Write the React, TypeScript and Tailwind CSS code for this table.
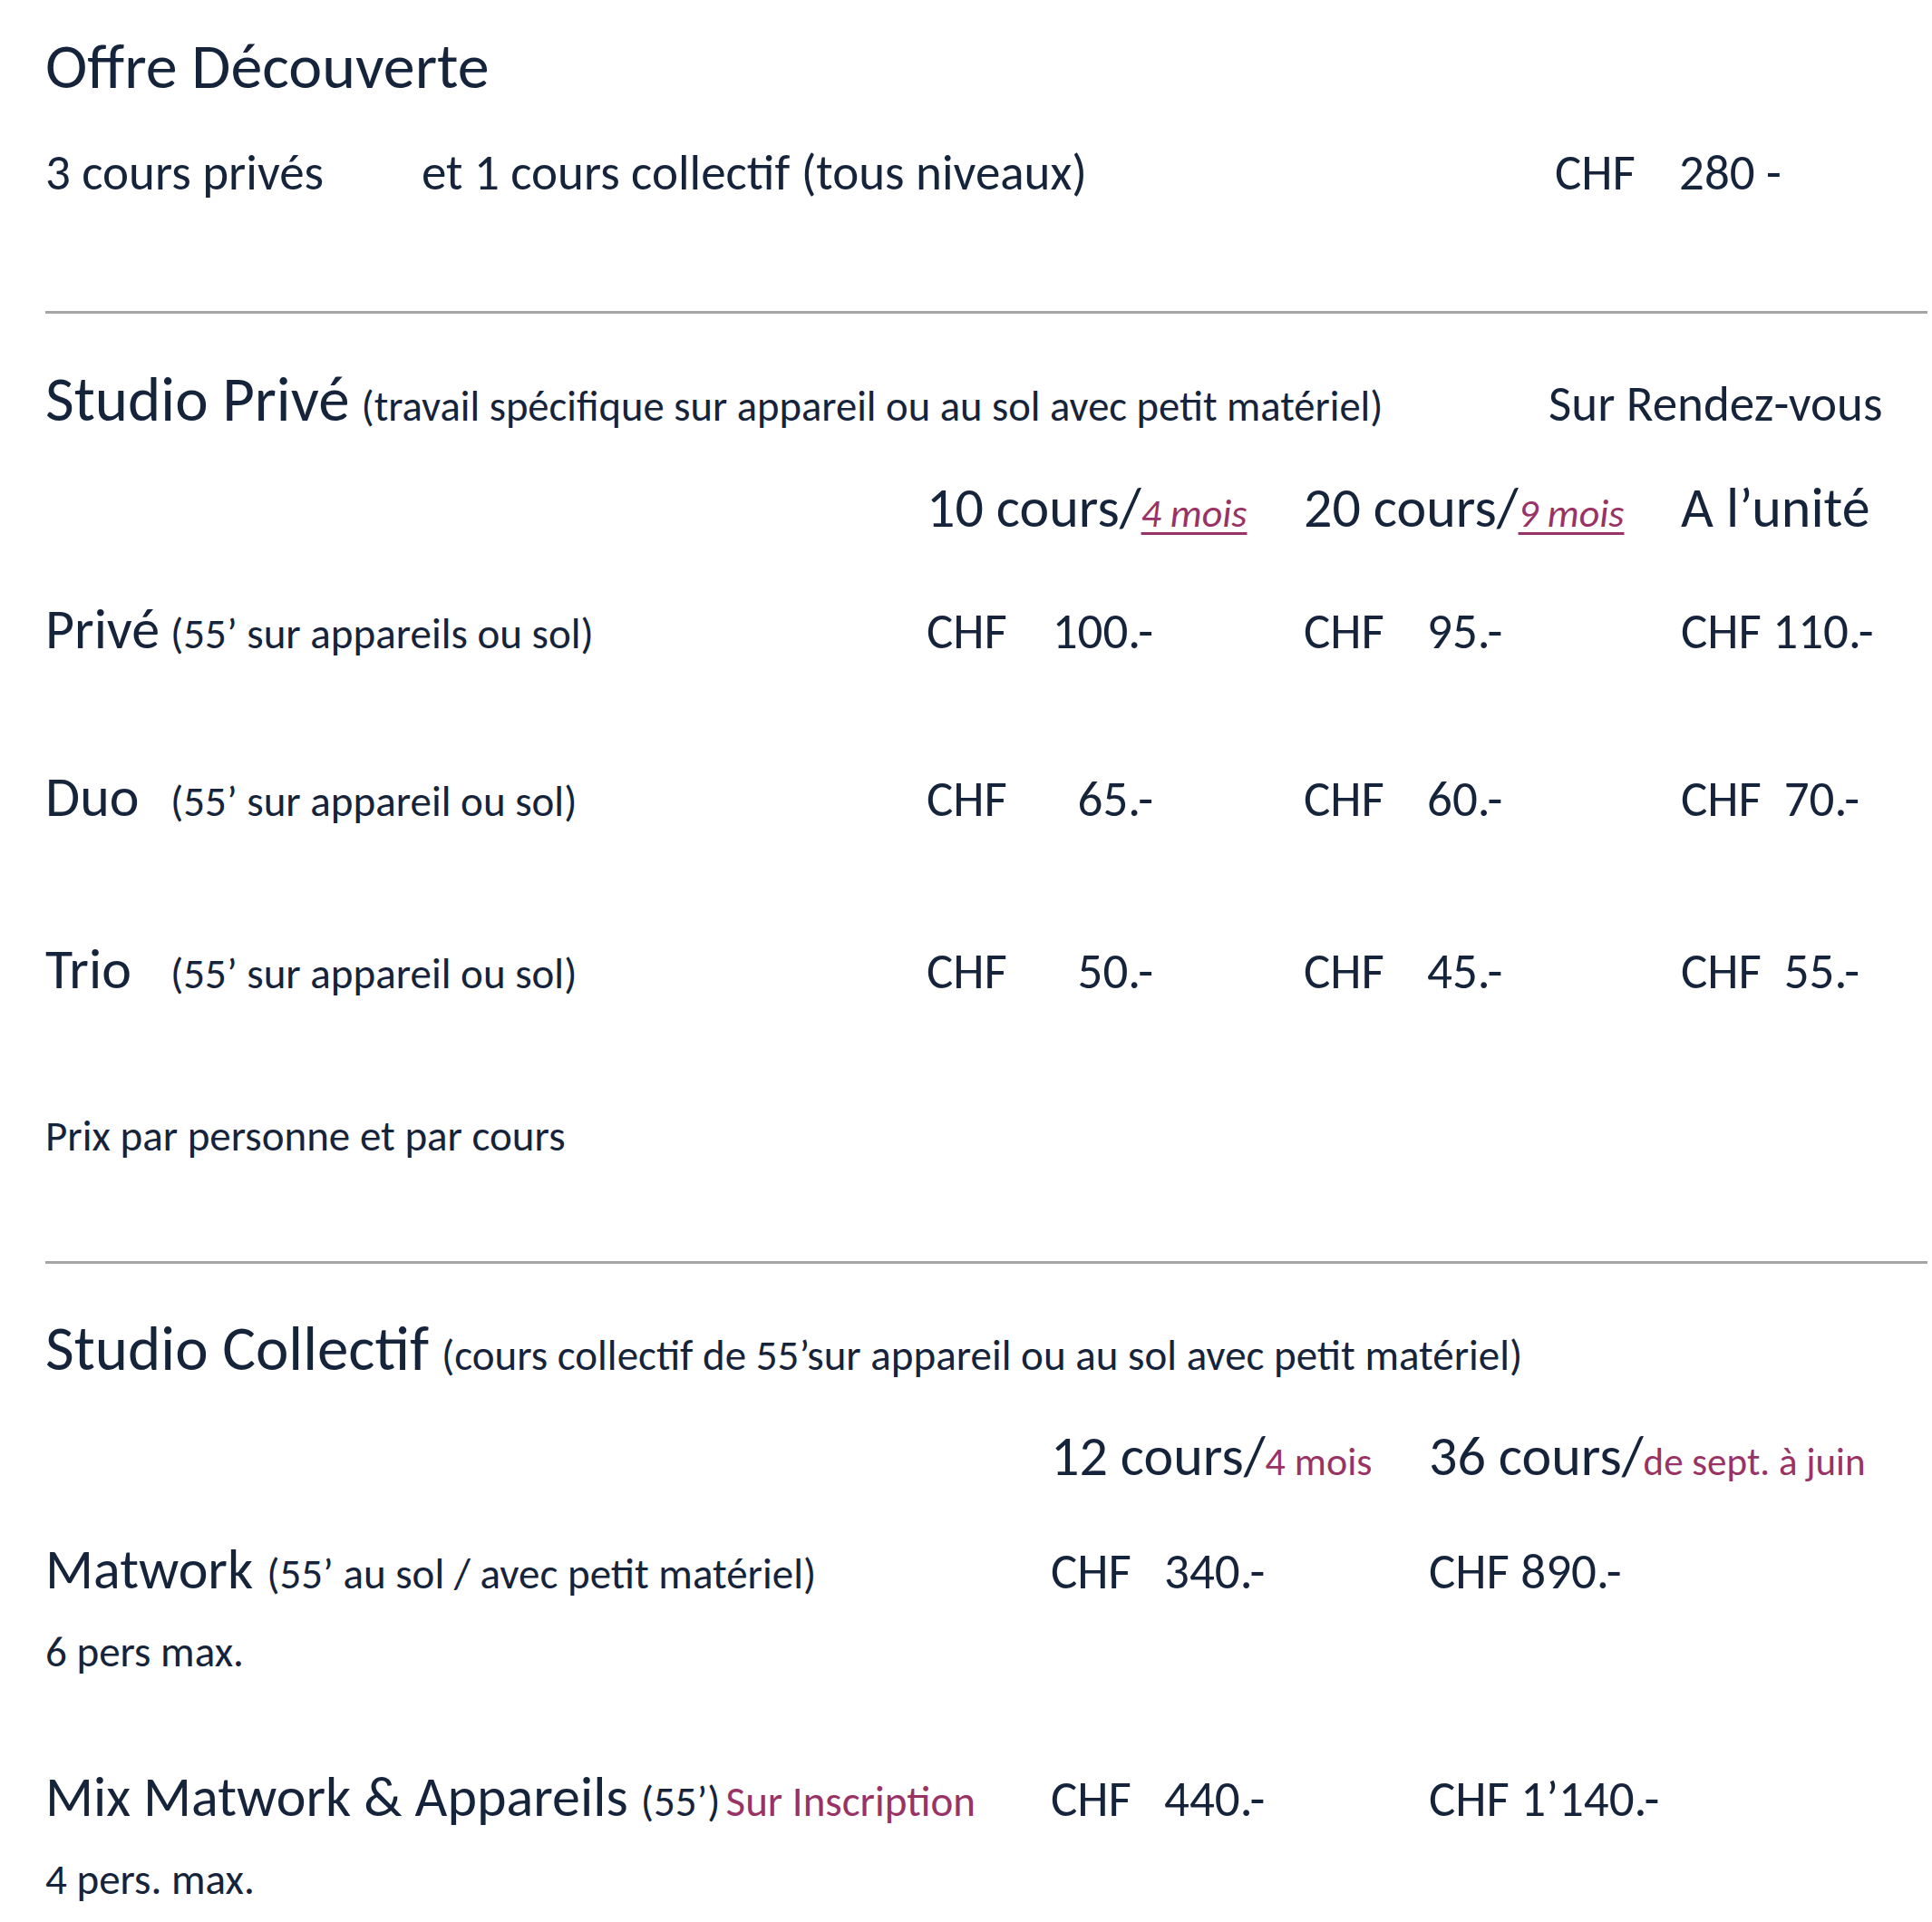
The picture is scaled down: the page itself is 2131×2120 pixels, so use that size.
import React from "react";

const NAVY = "text-[#16243b]";

function PriveRow({ title, desc, a, b, c, mt }: { title: string; desc: string; a: string; b: string; c: string; mt: string }) {
  return (
    <div className={`flex items-baseline ${mt}`}>
      <div className="flex w-[972px] items-baseline">
        <span className="w-[138px] text-[62px] leading-none">{title}</span>
        <span className="text-[47px] leading-none">{desc}</span>
      </div>
      <div className="flex w-[416px] items-baseline">
        <span className="w-[136px] text-[55px] leading-none">CHF</span>
        <span className="w-[114px] text-right text-[55px] leading-none">{a}</span>
      </div>
      <div className="flex w-[416px] items-baseline">
        <span className="w-[136px] text-[55px] leading-none">CHF</span>
        <span className="w-[87px] text-left text-[55px] leading-none">{b}</span>
      </div>
      <span className="whitespace-pre text-[55px] leading-none">{c}</span>
    </div>
  );
}

export default function App() {
  return (
    <div
      className={`min-h-screen bg-white ${NAVY} pl-[50px] pt-[38px] font-['Carlito','Calibri','Lato',sans-serif]`}
    >
      {/* Offre Découverte */}
      <div className="text-[70px] leading-none">Offre Découverte</div>
      <div className="mt-[55px] flex items-baseline text-[55px] leading-none">
        <span className="w-[415px]">3 cours privés</span>
        <span className="w-[1250px]">et 1 cours collectif (tous niveaux)</span>
        <span className="w-[137px]">CHF</span>
        <span>280 -</span>
      </div>

      <div className="mt-[125px] h-[3px] w-[2076px] bg-[#a6a6a6]" />

      {/* Studio Privé */}
      <div className="mt-[60px] flex items-baseline">
        <div className="flex w-[1658px] items-baseline">
          <span className="text-[69px] leading-none">Studio Privé</span>
          <span className="ml-[13px] text-[46.6px] leading-none">
            (travail spécifique sur appareil ou au sol avec petit matériel)
          </span>
        </div>
        <span className="text-[55px] leading-none">Sur Rendez-vous</span>
      </div>

      <div className="mt-[54px] flex items-baseline">
        <div className="w-[972px]" />
        <div className="flex w-[416px] items-baseline">
          <span className="text-[62px] leading-none">10 cours/</span>
          <span className="text-[44px] italic leading-none text-[#993366] underline decoration-[3px] underline-offset-[6px]">
            4 mois
          </span>
        </div>
        <div className="flex w-[416px] items-baseline">
          <span className="text-[62px] leading-none">20 cours/</span>
          <span className="text-[44px] italic leading-none text-[#993366] underline decoration-[3px] underline-offset-[6px]">
            9 mois
          </span>
        </div>
        <span className="text-[62px] leading-none">A l’unité</span>
      </div>

      <PriveRow mt="mt-[72px]" title="Privé" desc="(55’ sur appareils ou sol)" a="100.-" b="95.-" c="CHF 110.-" />
      <PriveRow mt="mt-[123px]" title="Duo" desc="(55’ sur appareil ou sol)" a="65.-" b="60.-" c="CHF  70.-" />
      <PriveRow mt="mt-[128px]" title="Trio" desc="(55’ sur appareil ou sol)" a="50.-" b="45.-" c="CHF  55.-" />

      <div className="mt-[130px] text-[47px] leading-none">Prix par personne et par cours</div>

      <div className="mt-[114px] h-[3px] w-[2076px] bg-[#a6a6a6]" />

      {/* Studio Collectif */}
      <div className="mt-[59px] flex items-baseline">
        <span className="text-[69px] leading-none">Studio Collectif</span>
        <span className="ml-[14px] text-[47px] leading-none">
          (cours collectif de 55’sur appareil ou au sol avec petit matériel)
        </span>
      </div>

      <div className="mt-[53px] flex items-baseline">
        <div className="w-[1109px]" />
        <div className="flex w-[417px] items-baseline">
          <span className="text-[62px] leading-none">12 cours/</span>
          <span className="text-[44px] leading-none text-[#993366]">4 mois</span>
        </div>
        <div className="flex items-baseline">
          <span className="text-[62px] leading-none">36 cours/</span>
          <span className="text-[43px] leading-none text-[#993366]">de sept. à juin</span>
        </div>
      </div>

      <div className="mt-[63px] flex items-baseline">
        <div className="flex w-[1109px] items-baseline">
          <span className="text-[62px] leading-none">Matwork</span>
          <span className="ml-[15px] text-[47px] leading-none">(55’ au sol / avec petit matériel)</span>
        </div>
        <div className="flex w-[417px] items-baseline">
          <span className="w-[125px] text-[55px] leading-none">CHF</span>
          <span className="text-[55px] leading-none">340.-</span>
        </div>
        <span className="text-[55px] leading-none">CHF 890.-</span>
      </div>
      <div className="mt-[37px] text-[47px] leading-none">6 pers max.</div>

      <div className="mt-[105px] flex items-baseline">
        <div className="flex w-[1109px] items-baseline">
          <span className="text-[62px] leading-none">Mix Matwork &amp; Appareils</span>
          <span className="ml-[14px] text-[47px] leading-none">(55’)</span>
          <span className="ml-[6px] text-[47px] leading-none text-[#993366]">Sur Inscription</span>
        </div>
        <div className="flex w-[417px] items-baseline">
          <span className="w-[125px] text-[55px] leading-none">CHF</span>
          <span className="text-[55px] leading-none">440.-</span>
        </div>
        <span className="text-[55px] leading-none">CHF 1’140.-</span>
      </div>
      <div className="mt-[37px] text-[47px] leading-none">4 pers. max.</div>
    </div>
  );
}
